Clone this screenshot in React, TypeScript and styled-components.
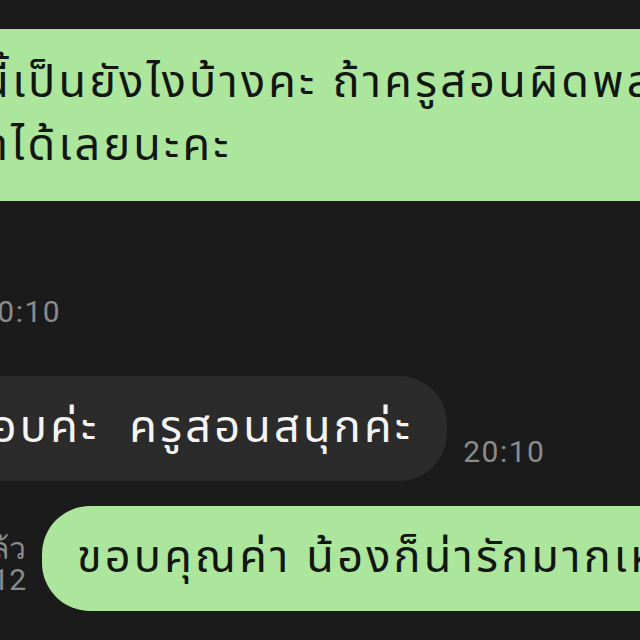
import styled, { createGlobalStyle } from "styled-components";

const GlobalStyle = createGlobalStyle`
  html, body {
    margin: 0;
    padding: 0;
    background: #1b1b1b;
  }
`;

const thaiFont = `"Noto Sans Thai", "Noto Sans", "DejaVu Sans", sans-serif`;
const timeFont = `Roboto, "Liberation Sans", sans-serif`;

//# 화면 전체
const Screen = styled.div`
  width: 640px;
  height: 640px;
  overflow: hidden;
  background: #1b1b1b;
`;

const Thread = styled.div`
  display: flex;
  flex-direction: column;
  padding-top: 29px;
`;

const Row = styled.div<{ $top?: number; $left?: number; $gap?: number }>`
  display: flex;
  align-items: flex-end;
  gap: ${({ $gap }) => $gap ?? 16}px;
  margin-top: ${({ $top }) => $top ?? 0}px;
  margin-left: ${({ $left }) => $left ?? 0}px;
  white-space: nowrap;
`;

//# 말풍선
const Bubble = styled.div<{ $mine?: boolean; $pad: string; $radius: string }>`
  flex: none;
  padding: ${({ $pad }) => $pad};
  border-radius: ${({ $radius }) => $radius};
  background: ${({ $mine }) => ($mine ? "#ace59c" : "#2b2b2b")};
  color: ${({ $mine }) => ($mine ? "#111611" : "#f4f4f4")};
  font-family: ${thaiFont};
  font-size: 45px;
  letter-spacing: 3.2px;
  line-height: 63px;
  white-space: pre;
`;

const Time = styled.span<{ $drop?: number }>`
  margin-bottom: ${({ $drop }) => $drop ?? 0}px;
  font-family: ${timeFont};
  font-size: 30px;
  letter-spacing: 1.5px;
  line-height: 30px;
  color: #8b8b8b;
`;

const Receipt = styled.div`
  display: flex;
  flex-direction: column;
  align-items: flex-end;
  font-family: ${timeFont};
  font-size: 30px;
  line-height: 31px;
  color: #8b8b8b;
  padding-bottom: 16px;
`;

export default function App() {
  return (
    <Screen>
      <GlobalStyle />
      <Thread>
        <Row $left={-142}>
          <Bubble $mine $pad="23px 40px" $radius="40px">
            {"ครั้งนี้เป็นยังไงบ้างคะ ถ้าครูสอนผิดพลาดตรงไหน\nทักมาได้เลยนะคะ"}
          </Bubble>
        </Row>
        <Row $top={96} $left={-21}>
          <Time>20:10</Time>
        </Row>
        <Row $top={49} $left={-197} $gap={16}>
          <Bubble $pad="21px 34px 21px 160px" $radius="48px">
            {"ขอบค่ะ  ครูสอนสนุกค่ะ"}
          </Bubble>
          <Time $drop={14}>20:10</Time>
        </Row>
        <Row $top={25} $left={-84}>
          <Receipt>
            <span>อ่านแล้ว</span>
            <span>20:12</span>
          </Receipt>
          <Bubble $mine $pad="21px 40px 21px 35px" $radius="48px">
            {"ขอบคุณค่า น้องก็น่ารักมากเหมือนกันค่ะ"}
          </Bubble>
        </Row>
      </Thread>
    </Screen>
  );
}
